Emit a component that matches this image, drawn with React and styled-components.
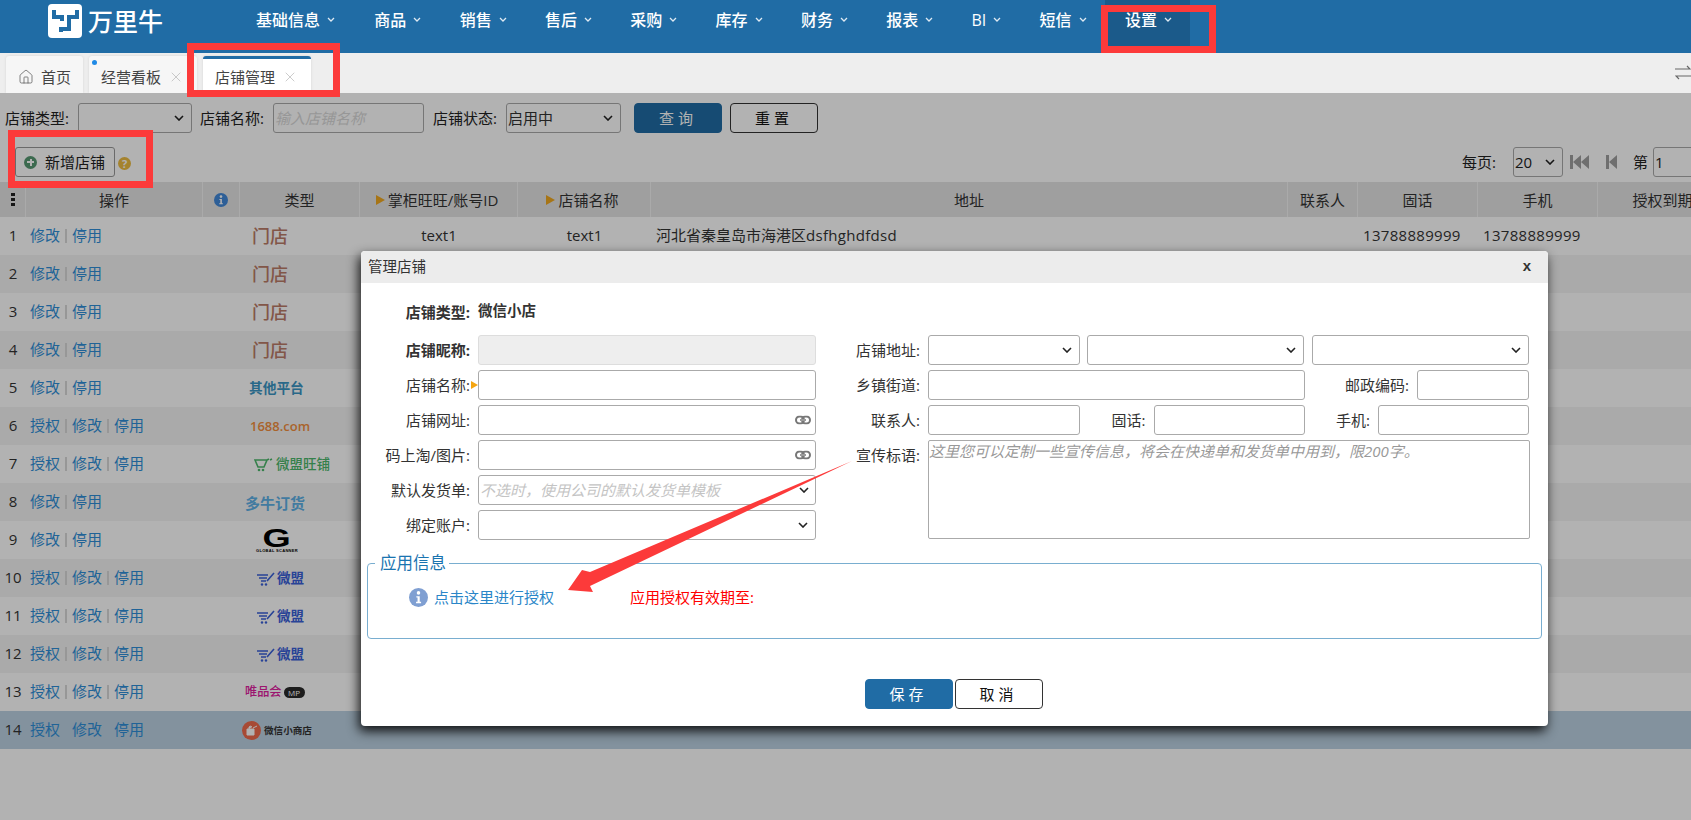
import React from "react";
import styled, { createGlobalStyle, css } from "styled-components";
import { Home, X } from "lucide-react";

const GlobalStyle = createGlobalStyle`
  html, body { margin: 0; padding: 0; overflow: hidden; background: #fff; }
  body { font: 15px/1.2 "Open Sans", "Noto Sans CJK SC", sans-serif; color: #333; }
  * { box-sizing: border-box; }
  input, select, textarea, button { font: inherit; color: inherit; margin: 0; }
  input::placeholder, textarea::placeholder { font-style: italic; color: #bbb; opacity: 1; }
`;

const Page = styled.div`
  position: relative;
  width: 1691px;
  height: 820px;
  overflow: hidden;
`;

/* ---------- top navigation ---------- */
const TopBar = styled.header`
  height: 53px;
  background: #206ca5;
  display: flex;
  align-items: flex-start;
  padding-left: 48px;
`;
const Brand = styled.div`
  display: flex;
  align-items: center;
  gap: 6px;
  width: 188px;
  height: 42px;
  color: #fff;
  font-size: 25px;
  font-weight: 500;
`;
const NavItem = styled.div`
  height: 46px;
  padding: 0 18.3px 4px 20px;
  display: flex;
  align-items: center;
  gap: 7px;
  color: #fff;
  font-size: 16px;
  font-weight: 500;
  background: ${(p) => (p.$active ? "#1b5a8a" : "transparent")};
  &:first-child { margin-right: 1px; }
`;
const NavList = styled.nav`
  display: flex;
`;

/* ---------- tabs ---------- */
const TabBar = styled.div`
  position: relative;
  height: 40px;
  background: #eeeeee;
  padding: 3px 0 0 6px;
  display: flex;
  gap: 6px;
`;
const Tab = styled.div`
  position: relative;
  width: 108px;
  height: 37px;
  display: flex;
  align-items: center;
  padding: 4px 0 0 12px;
  gap: 7px;
  background: ${(p) => (p.$active ? "#fff" : "#f6f6f6")};
  color: #444;
  border-radius: 3px 3px 0 0;
  box-shadow: 0 0 3px rgba(0, 0, 0, 0.1);
  ${(p) => p.$active && css`border-top: 3px solid #206ca5; padding-top: 1px;`}
`;
const HomeTab = styled(Tab)`
  width: 77px;
  padding-left: 12px;
  gap: 7px;
`;
const TabDot = styled.i`
  position: absolute;
  left: 3px;
  top: 4px;
  width: 5px;
  height: 5px;
  border-radius: 50%;
  background: #1f8ae6;
`;
const SwitchIcon = styled.svg`
  position: absolute;
  right: 0;
  top: 12px;
`;

/* ---------- page content ---------- */
const Content = styled.main`
  position: relative;
  height: 727px;
  overflow: hidden;
  background: #fff;
`;
const Backdrop = styled.div`
  position: absolute;
  inset: 0;
  z-index: 1;
  background: rgba(0, 0, 0, 0.3);
`;
const FilterRow = styled.div`
  display: flex;
  align-items: center;
  height: 30px;
  margin-top: 10px;
  padding-left: 5px;
`;
const FilterLabel = styled.label`
  width: 63px;
  margin-right: 10px;
  white-space: nowrap;
  color: #222;
`;
const fieldCss = css`
  height: 30px;
  border: 1px solid #aaa;
  border-radius: 3px;
  background-color: #fff;
  padding: 0 1px;
  outline: none;
  flex: none;
`;
const Select = styled.select`
  ${fieldCss}
  appearance: none;
  background-image: url("data:image/svg+xml,%3Csvg xmlns='http://www.w3.org/2000/svg' width='10' height='6'%3E%3Cpath d='M1 1l4 4 4-4' fill='none' stroke='%23222' stroke-width='1.6'/%3E%3C/svg%3E");
  background-repeat: no-repeat;
  background-position: right 7px center;
  width: ${(p) => p.$w}px;
  margin-right: ${(p) => p.$mr || 0}px;
`;
const Input = styled.input`
  ${fieldCss}
  width: ${(p) => p.$w}px;
  margin-right: ${(p) => p.$mr || 0}px;
  ${(p) => p.disabled && css`background-color: #eeeeee; border-color: #ddd;`}
  &::placeholder { color: #d8d8d8; }
`;
const Button = styled.button`
  width: 88px;
  height: 30px;
  border-radius: 4px;
  letter-spacing: 4px;
  cursor: pointer;
  border: 1px solid ${(p) => (p.$primary ? "#206ca5" : "#333")};
  background: ${(p) => (p.$primary ? "#206ca5" : "#fff")};
  color: ${(p) => (p.$primary ? "#fff" : "#111")};
`;
const ResetButton = styled(Button)`
  margin-left: 8px;
`;
const CancelButton = styled(Button)`
  margin-left: 2px;
`;
const ToolRow = styled.div`
  display: flex;
  align-items: center;
  justify-content: space-between;
  height: 30px;
  margin-top: 14px;
  padding-left: 15px;
`;
const AddGroup = styled.div`
  display: flex;
  align-items: center;
  gap: 3px;
`;
const AddButton = styled.button`
  width: 100px;
  height: 30px;
  display: flex;
  align-items: center;
  gap: 8px;
  padding: 0 0 0 8px;
  background: #fff;
  border: 1px solid #999;
  border-radius: 3px;
  color: #222;
`;
const PlusBadge = styled.span`
  width: 13px;
  height: 13px;
  border-radius: 50%;
  background: #579872;
  color: #fff;
  position: relative;
  flex: none;
  &::before, &::after {
    content: "";
    position: absolute;
    background: #fff;
  }
  &::before { left: 3px; right: 3px; top: 5.5px; height: 2px; }
  &::after { top: 3px; bottom: 3px; left: 5.5px; width: 2px; }
`;
const HelpBadge = styled.span`
  width: 13px;
  height: 13px;
  margin-top: 3px;
  border-radius: 50%;
  background: #ecbc42;
  color: #fff;
  font-size: 11px;
  font-weight: 700;
  line-height: 13px;
  text-align: center;
`;
const Pager = styled.div`
  display: flex;
  align-items: center;
  flex: none;
  margin-right: -22px;
  color: #222;
`;
const PagerLabel = styled.span`
  margin-right: ${(p) => p.$mr}px;
  white-space: nowrap;
`;
const PagerIcon = styled.svg`
  margin-right: ${(p) => p.$mr}px;
  flex: none;
`;

/* ---------- table ---------- */
const columns = "26px 177px 37px 120px 158px 133px 637px 70px 120px 120px 130px";
const HeadRow = styled.div`
  display: grid;
  grid-template-columns: ${columns};
  height: 35px;
  margin-top: 5px;
  background: #e4e4e4;
`;
const HeadCell = styled.div`
  display: flex;
  align-items: center;
  justify-content: center;
  gap: 3px;
  white-space: nowrap;
  color: #333;
  border-right: 1px solid #f4f4f4;
`;
const Triangle = styled.i`
  width: 0;
  height: 0;
  margin-left: -3px;
  border-left: 9px solid #f0a820;
  border-top: 5px solid transparent;
  border-bottom: 5px solid transparent;
`;
const Row = styled.div`
  display: grid;
  grid-template-columns: ${columns};
  height: 38px;
  background: ${(p) => (p.$selected ? "#bcd2e3" : p.$even ? "#f4f4f4" : "#fff")};
`;
const Cell = styled.div`
  display: flex;
  align-items: center;
  white-space: nowrap;
  color: #333;
  justify-content: ${(p) => (p.$center ? "center" : "flex-start")};
  padding-left: ${(p) => p.$pl || 0}px;
  padding-bottom: 3px;
`;
const Latin = styled.span`
  letter-spacing: 0.3px;
`;
const OpLink = styled.a`
  color: #2f8fd8;
`;
const OpSep = styled.span`
  width: 2px;
  height: 14px;
  margin: 2px 5px 0;
  background: ${(p) => (p.$faint ? "#bcd2e3" : "#d8d8d8")};
`;

/* ---------- store type logos ---------- */
const LogoBase = styled.div`
  display: flex;
  align-items: center;
  white-space: nowrap;
  margin: 4px 0 0 ${(p) => p.$ml}px;
`;
const StoreLogo = styled(LogoBase)`
  font-size: 18px;
  font-weight: 500;
  color: #bb7b68;
`;
const OtherLogo = styled(LogoBase)`
  font-size: 13.7px;
  font-weight: 700;
  color: #3c96c4;
`;
const AlibabaLogo = styled(LogoBase)`
  font-size: 13px;
  font-weight: 600;
  color: #f28f3e;
`;
const ShopLogo = styled(LogoBase)`
  gap: 3px;
  font-size: 13.5px;
  font-weight: 500;
  color: #4db86c;
`;
const DuoniuLogo = styled(LogoBase)`
  font-size: 15px;
  font-weight: 700;
  color: #5eb0e6;
`;
const GlobalLogo = styled(LogoBase)`
  flex-direction: column;
  color: #000;
  width: 42px;
`;
const GlobalMark = styled.b`
  font: 900 25px/20px "Liberation Sans", sans-serif;
  transform: scaleX(1.45);
`;
const GlobalCaption = styled.span`
  font: 700 4px/5px "Liberation Sans", sans-serif;
  letter-spacing: 0.3px;
`;
const WeimobLogo = styled(LogoBase)`
  gap: 1px;
  font-size: 13.5px;
  font-weight: 700;
  color: #3a60d8;
`;
const VipLogo = styled(LogoBase)`
  gap: 2px;
  font-size: 12.2px;
  font-weight: 500;
  color: #e020a0;
`;
const MpPill = styled.span`
  width: 21px;
  height: 11px;
  border-radius: 6px;
  background: #2a2a2a;
  color: #fff;
  font: 400 8px/11px "Open Sans", sans-serif;
  text-align: center;
`;
const WxShopLogo = styled(LogoBase)`
  gap: 3px;
  font-size: 9.6px;
  font-weight: 700;
  color: #333;
`;

/* ---------- modal ---------- */
const Modal = styled.section`
  position: absolute;
  z-index: 2;
  left: 361px;
  top: 158px;
  width: 1187px;
  height: 475px;
  background: #fff;
  border-radius: 4px;
  box-shadow: -2px 5px 12px rgba(0, 0, 0, 0.9);
`;
const ModalTitle = styled.div`
  height: 32px;
  padding: 0 7px;
  display: flex;
  align-items: center;
  justify-content: space-between;
  background: #ececec;
  border-radius: 4px 4px 0 0;
  color: #333;
  font-size: 14.5px;
`;
const CloseMark = styled.span`
  font: 700 15px/1 "Liberation Sans", sans-serif;
  margin: -4px 10px 0 0;
  color: #333;
`;
const TypeRow = styled.div`
  display: flex;
  align-items: center;
  height: 30px;
  margin: 14px 0 8px;
`;
const Columns = styled.div`
  display: flex;
  gap: 40px;
`;
const Column = styled.div`
  width: ${(p) => p.$w}px;
`;
const FormRow = styled.div`
  display: flex;
  align-items: center;
  height: 30px;
  margin-bottom: 5px;
`;
const FormLabel = styled.label`
  position: relative;
  flex: none;
  width: ${(p) => p.$w}px;
  margin-right: 8px;
  text-align: right;
  white-space: nowrap;
  color: #333;
  font-weight: ${(p) => (p.$bold ? 700 : 400)};
  ${(p) => p.$required && css`
    &::after {
      content: "";
      position: absolute;
      right: -8px;
      top: 5px;
      border-left: 7px solid #f5a511;
      border-top: 4px solid transparent;
      border-bottom: 4px solid transparent;
    }
  `}
`;
const GrowLabel = styled(FormLabel)`
  flex: 1;
`;
const TypeValue = styled.b`
  margin-top: -2px;
  font-size: 14.5px;
  color: #333;
`;
const FormInput = styled(Input)`
  &::placeholder { color: #c4c4c4; }
`;
const FormSelect = styled(Select)``;
const InputWrap = styled.div`
  position: relative;
  flex: none;
  display: flex;
  align-items: center;
  width: ${(p) => p.$w}px;
`;
const InputGlyph = styled.svg`
  position: absolute;
  right: ${(p) => p.$right}px;
  top: 50%;
  transform: translateY(-50%);
`;
const SloganRow = styled.div`
  display: flex;
  align-items: flex-start;
  height: 99px;
`;
const SloganLabel = styled(FormLabel)`
  margin-top: 6px;
`;
const Slogan = styled.textarea`
  flex: none;
  width: 602px;
  height: 99px;
  padding: 1px 0;
  resize: none;
  border: 1px solid #aaa;
  border-radius: 2px;
  outline: none;
  &::placeholder { color: #999; }
`;
const AppInfo = styled.fieldset`
  width: 1175px;
  height: 88px;
  margin: 6px 0 0 6px;
  padding: 0;
  border: 1px solid #79aed0;
  border-radius: 4px;
`;
const AppLegend = styled.legend`
  margin-left: 7px;
  padding: 0 3px 0 5px;
  font-size: 16.5px;
  line-height: 24px;
  color: #1a74b0;
`;
const AppLine = styled.div`
  display: flex;
  align-items: center;
  height: 22px;
  margin-top: 11px;
  padding-left: 41px;
`;
const AuthLink = styled.a`
  margin-left: 6px;
  color: #2a86c8;
`;
const AuthExpire = styled.span`
  margin-left: 76px;
  color: #ff0000;
`;
const ModalFooter = styled.div`
  display: flex;
  justify-content: center;
  margin-top: 40px;
  padding-right: 2px;
`;

/* ---------- annotations ---------- */
const RedBox = styled.div`
  position: absolute;
  z-index: 3;
  left: ${(p) => p.$x}px;
  top: ${(p) => p.$y}px;
  width: ${(p) => p.$w}px;
  height: ${(p) => p.$h}px;
  border: 7px solid #fc3a3a;
`;
const ArrowLayer = styled.svg`
  position: absolute;
  z-index: 3;
  left: 0;
  top: 0;
  pointer-events: none;
`;

/* ---------- drawings ---------- */
const BrandMark = () => (
  <svg width="34" height="34" viewBox="0 0 34 34">
    <rect width="34" height="34" rx="4" fill="#fff" />
    <path d="M6 6v7h8v4M29 6v7h-8v12h-8v3" fill="none" stroke="#206ca5" strokeWidth="4" />
  </svg>
);
const Caret = () => (
  <svg width="8" height="5" viewBox="0 0 8 5" style={{ marginTop: -3 }}>
    <path d="M1 1l3 3 3-3" fill="none" stroke="#dfeaf3" strokeWidth="1.3" />
  </svg>
);
const InfoDot = ({ size = 14, fill = "#4288d9" }) => (
  <svg width={size} height={size} viewBox="0 0 14 14">
    <circle cx="7" cy="7" r="7" fill={fill} />
    <circle cx="7" cy="3.6" r="1.3" fill="#fff" />
    <path d="M5.4 6h2.5v4.2h1v1H5.2v-1h1.1V7H5.4z" fill="#fff" />
  </svg>
);
const ChainGlyph = () => (
  <InputGlyph $right={5} width="16" height="9" viewBox="0 0 16 9">
    <rect x="1" y="1" width="8" height="7" rx="3.5" fill="none" stroke="#777" strokeWidth="2" />
    <rect x="7" y="1" width="8" height="7" rx="3.5" fill="none" stroke="#777" strokeWidth="2" />
    <path d="M5 4.5h6" stroke="#999" strokeWidth="2" />
  </InputGlyph>
);
const ChevronGlyph = () => (
  <InputGlyph $right={7} width="10" height="6" viewBox="0 0 10 6">
    <path d="M1 1l4 4 4-4" fill="none" stroke="#222" strokeWidth="1.6" />
  </InputGlyph>
);
const ShopCart = () => (
  <svg width="19" height="14" viewBox="0 0 19 14">
    <path d="M1 2l3 7h6l3-7zM13 2l2-1M16 2l2-1" fill="none" stroke="#4db86c" strokeWidth="1.6" />
    <circle cx="5" cy="12" r="1.3" fill="#4db86c" />
    <circle cx="9" cy="12" r="1.3" fill="#4db86c" />
  </svg>
);
const WeimobCart = () => (
  <svg width="19" height="14" viewBox="0 0 19 14">
    <path d="M0 3h11M2 6h8M4 9h5M10 9l7-8" fill="none" stroke="#3a60d8" strokeWidth="1.6" />
    <circle cx="5" cy="12.5" r="1.2" fill="#3a60d8" />
    <circle cx="9" cy="12.5" r="1.2" fill="#3a60d8" />
  </svg>
);
const WxBag = () => (
  <svg width="19" height="19" viewBox="0 0 19 19">
    <circle cx="9.5" cy="9.5" r="9.5" fill="#ef6a4c" />
    <path d="M5 8h7v6H5zM7 8V6a2 2 0 0 1 3 0M11 7l4-2" fill="#fff" stroke="#fff" strokeWidth="1" />
  </svg>
);

const logos = {
  store: <StoreLogo $ml={12}>门店</StoreLogo>,
  other: <OtherLogo $ml={9}>其他平台</OtherLogo>,
  ali: <AlibabaLogo $ml={10}>1688.com</AlibabaLogo>,
  shop: <ShopLogo $ml={14}><ShopCart />微盟旺铺</ShopLogo>,
  duoniu: <DuoniuLogo $ml={5}>多牛订货</DuoniuLogo>,
  global: <GlobalLogo $ml={16}><GlobalMark>G</GlobalMark><GlobalCaption>GLOBAL SCANNER</GlobalCaption></GlobalLogo>,
  weimob: <WeimobLogo $ml={17}><WeimobCart />微盟</WeimobLogo>,
  vip: <VipLogo $ml={5}>唯品会<MpPill>MP</MpPill></VipLogo>,
  wx: <WxShopLogo $ml={2}><WxBag />微信小商店</WxShopLogo>,
};

const rows = [
  ["store", false], ["store", false], ["store", false], ["store", false], ["other", false],
  ["ali", true], ["shop", true], ["duoniu", false], ["global", false], ["weimob", true],
  ["weimob", true], ["weimob", true], ["vip", true], ["wx", true],
];

const navItems = ["基础信息", "商品", "销售", "售后", "采购", "库存", "财务", "报表", "BI", "短信", "设置"];

const TabClose = () => (
  <X size={16} strokeWidth={0.9} color="#aaa" />
);

export default function App() {
  return (
    <Page>
      <GlobalStyle />
      <TopBar>
        <Brand><BrandMark />万里牛</Brand>
        <NavList>
          {navItems.map((n) => (
            <NavItem key={n} $active={n === "设置"}>{n}<Caret /></NavItem>
          ))}
        </NavList>
      </TopBar>

      <TabBar>
        <HomeTab><Home size={16} strokeWidth={1.1} color="#555" />首页</HomeTab>
        <Tab><TabDot />经营看板<TabClose /></Tab>
        <Tab $active>店铺管理<TabClose /></Tab>
        <SwitchIcon width="16" height="15" viewBox="0 0 16 15">
          <path d="M0 4h15l-3-3M16 11H1l3 3" fill="none" stroke="#666" strokeWidth="1.2" />
        </SwitchIcon>
      </TabBar>

      <Content>
        <FilterRow>
          <FilterLabel>店铺类型:</FilterLabel>
          <Select $w={114} $mr={8}><option></option></Select>
          <FilterLabel>店铺名称:</FilterLabel>
          <Input $w={151} $mr={9} placeholder="输入店铺名称" />
          <FilterLabel>店铺状态:</FilterLabel>
          <Select $w={115} $mr={13}><option>启用中</option></Select>
          <Button $primary>查询</Button>
          <ResetButton>重置</ResetButton>
        </FilterRow>

        <ToolRow>
          <AddGroup>
            <AddButton><PlusBadge />新增店铺</AddButton>
            <HelpBadge>?</HelpBadge>
          </AddGroup>
          <Pager>
            <PagerLabel $mr={17}>每页:</PagerLabel>
            <Select $w={50} $mr={7}><option>20</option></Select>
            <PagerIcon $mr={17} width="19" height="14" viewBox="0 0 19 14">
              <path d="M0 0h3v14H0zM11 0v14L3 7zM19 0v14l-8-7z" fill="#a0a0a0" />
            </PagerIcon>
            <PagerIcon $mr={16} width="11" height="14" viewBox="0 0 11 14">
              <path d="M0 0h3v14H0zM11 0v14L3 7z" fill="#a0a0a0" />
            </PagerIcon>
            <PagerLabel $mr={5}>第</PagerLabel>
            <Input $w={60} defaultValue="1" />
          </Pager>
        </ToolRow>

        <HeadRow>
          <HeadCell>
            <svg width="4" height="13" viewBox="0 0 4 13">
              <path d="M0 0h4v3H0zM0 5h4v3H0zM0 10h4v3H0z" fill="#222" />
            </svg>
          </HeadCell>
          <HeadCell>操作</HeadCell>
          <HeadCell><InfoDot /></HeadCell>
          <HeadCell>类型</HeadCell>
          <HeadCell><Triangle />掌柜旺旺/账号ID</HeadCell>
          <HeadCell><Triangle />店铺名称</HeadCell>
          <HeadCell>地址</HeadCell>
          <HeadCell>联系人</HeadCell>
          <HeadCell>固话</HeadCell>
          <HeadCell>手机</HeadCell>
          <HeadCell>授权到期</HeadCell>
        </HeadRow>

        {rows.map(([kind, auth], i) => {
          const selected = i === 13;
          return (
            <Row key={i} $even={i % 2 === 1} $selected={selected}>
              <Cell $center>{i + 1}</Cell>
              <Cell $pl={4}>
                {auth && <><OpLink>授权</OpLink><OpSep $faint={selected} /></>}
                <OpLink>修改</OpLink>
                <OpSep $faint={selected} />
                <OpLink>停用</OpLink>
              </Cell>
              <Cell />
              <Cell>{logos[kind]}</Cell>
              {i === 0 && (
                <>
                  <Cell $center>text1</Cell>
                  <Cell $center>text1</Cell>
                  <Cell $pl={5}>河北省秦皇岛市海港区<Latin>dsfhghdfdsd</Latin></Cell>
                  <Cell />
                  <Cell $pl={5}><Latin>13788889999</Latin></Cell>
                  <Cell $pl={5}><Latin>13788889999</Latin></Cell>
                </>
              )}
            </Row>
          );
        })}

        <Backdrop />

        <Modal>
          <ModalTitle>管理店铺<CloseMark>x</CloseMark></ModalTitle>
          <TypeRow>
            <FormLabel $w={109} $bold>店铺类型:</FormLabel>
            <TypeValue>微信小店</TypeValue>
          </TypeRow>
          <Columns>
            <Column $w={455}>
              <FormRow>
                <FormLabel $w={109} $bold>店铺昵称:</FormLabel>
                <FormInput $w={338} disabled />
              </FormRow>
              <FormRow>
                <FormLabel $w={109} $required>店铺名称:</FormLabel>
                <FormInput $w={338} />
              </FormRow>
              <FormRow>
                <FormLabel $w={109}>店铺网址:</FormLabel>
                <InputWrap $w={338}><FormInput $w={338} /><ChainGlyph /></InputWrap>
              </FormRow>
              <FormRow>
                <FormLabel $w={109}>码上淘/图片:</FormLabel>
                <InputWrap $w={338}><FormInput $w={338} /><ChainGlyph /></InputWrap>
              </FormRow>
              <FormRow>
                <FormLabel $w={109}>默认发货单:</FormLabel>
                <InputWrap $w={338}>
                  <FormInput $w={338} placeholder="不选时，使用公司的默认发货单模板" />
                  <ChevronGlyph />
                </InputWrap>
              </FormRow>
              <FormRow>
                <FormLabel $w={109}>绑定账户:</FormLabel>
                <FormSelect $w={338}><option></option></FormSelect>
              </FormRow>
            </Column>
            <Column $w={673}>
              <FormRow>
                <FormLabel $w={64}>店铺地址:</FormLabel>
                <FormSelect $w={152} $mr={7}><option></option></FormSelect>
                <FormSelect $w={217} $mr={8}><option></option></FormSelect>
                <FormSelect $w={217}><option></option></FormSelect>
              </FormRow>
              <FormRow>
                <FormLabel $w={64}>乡镇街道:</FormLabel>
                <FormInput $w={377} />
                <GrowLabel>邮政编码:</GrowLabel>
                <FormInput $w={112} />
              </FormRow>
              <FormRow>
                <FormLabel $w={64}>联系人:</FormLabel>
                <FormInput $w={152} />
                <GrowLabel>固话:</GrowLabel>
                <FormInput $w={151} />
                <GrowLabel>手机:</GrowLabel>
                <FormInput $w={151} />
              </FormRow>
              <SloganRow>
                <SloganLabel $w={64}>宣传标语:</SloganLabel>
                <Slogan placeholder="这里您可以定制一些宣传信息，将会在快递单和发货单中用到，限200字。" />
              </SloganRow>
            </Column>
          </Columns>

          <AppInfo>
            <AppLegend>应用信息</AppLegend>
            <AppLine>
              <InfoDot size={19} fill="#7f9fd2" />
              <AuthLink>点击这里进行授权</AuthLink>
              <AuthExpire>应用授权有效期至:</AuthExpire>
            </AppLine>
          </AppInfo>

          <ModalFooter>
            <Button $primary>保存</Button>
            <CancelButton>取消</CancelButton>
          </ModalFooter>
        </Modal>
      </Content>

      <RedBox $x={1101} $y={5} $w={115} $h={48} />
      <RedBox $x={187} $y={43} $w={153} $h={54} />
      <RedBox $x={8} $y={130} $w={145} $h={58} />
      <ArrowLayer width="1691" height="820" viewBox="0 0 1691 820">
        <path d="M852 461L590 586L593 592L568 590L582 570L590 572Z" fill="#fc3a3a" />
      </ArrowLayer>
    </Page>
  );
}
